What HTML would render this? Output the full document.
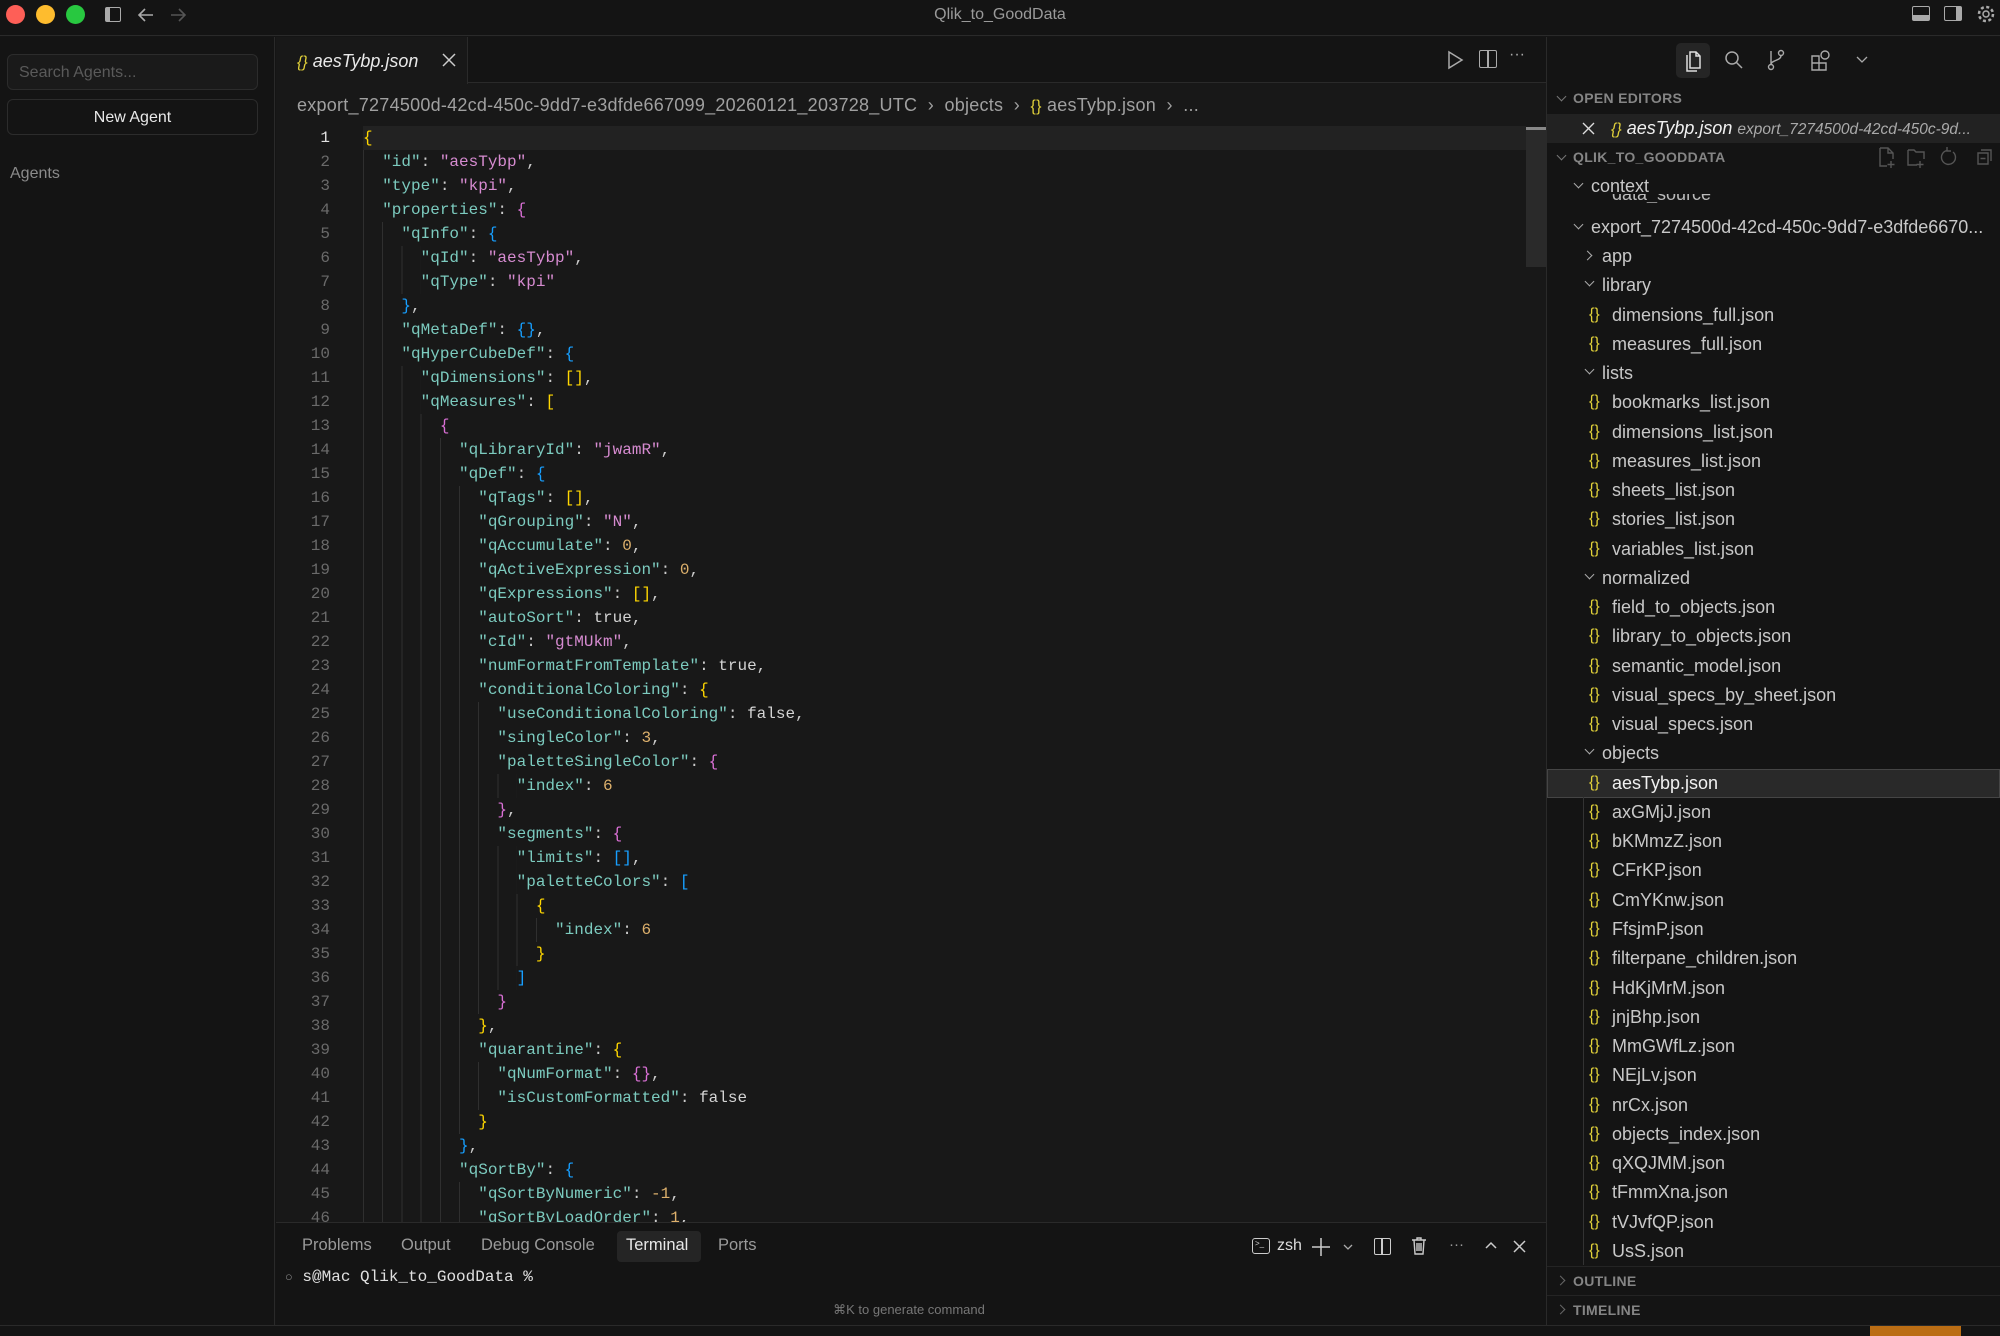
<!DOCTYPE html>
<html><head><meta charset="utf-8"><style>
*{margin:0;padding:0;box-sizing:border-box}
body{width:2000px;height:1336px;background:#151515;overflow:hidden;position:relative;font-family:"Liberation Sans",sans-serif;color:#ccc}
.a{position:absolute}
.mono{font-family:"Liberation Mono","DejaVu Sans Mono",monospace}
#code{position:absolute;left:363px;top:126px;width:1163px;height:1096px;overflow:hidden;font-size:16px}
.l{height:24px;line-height:24px;white-space:pre;background-image:repeating-linear-gradient(90deg,#2f2f2f 0 1px,transparent 1px 19.2px);background-repeat:no-repeat;color:#cccccc}
.k{color:#7ccbbf}.s{color:#d68bd0}.n{color:#ddb06c}.c{color:#d4d4d4}
.b1{color:#ffd700}.b2{color:#da70d6}.b3{color:#179fff}
#ln{position:absolute;left:290px;top:126px;width:40px;height:1096px;overflow:hidden;text-align:right;font-size:16px;color:#6a6a6a;line-height:24px}
.t{position:absolute;font-size:18px;color:#c8c8c8;white-space:nowrap;line-height:20px}
.br{color:#e2d23a;font-size:16px}
.hd{position:absolute;font-size:14px;font-weight:bold;color:#858585;letter-spacing:.3px}
.chev{position:absolute;width:7px;height:7px;border-right:1.5px solid #aaa;border-bottom:1.5px solid #aaa}
.dn{transform:rotate(45deg)}
.rt{transform:rotate(-45deg)}
.pt{position:absolute;top:1236px;font-size:16.5px;color:#9a9a9a}
</style></head><body>
<!-- title bar -->
<div class="a" style="left:0;top:0;width:2000px;height:36px;background:#141414;border-bottom:1px solid #2a2a2a"></div>
<div class="a" style="left:6px;top:5px;width:19px;height:19px;border-radius:50%;background:#fe5f57"></div>
<div class="a" style="left:36px;top:5px;width:19px;height:19px;border-radius:50%;background:#febc2e"></div>
<div class="a" style="left:66px;top:5px;width:19px;height:19px;border-radius:50%;background:#28c840"></div>
<div class="a" style="left:105px;top:7px;width:16px;height:15px;border:1.5px solid #aaa;border-radius:2px"><div style="width:4px;height:100%;background:#aaa"></div></div>
<svg class="a" style="left:136px;top:5px" width="20" height="20"><path d="M17 10H3M9 4L3 10L9 16" stroke="#aaa" stroke-width="1.6" fill="none"/></svg>
<svg class="a" style="left:168px;top:5px" width="20" height="20"><path d="M3 10H17M11 4L17 10L11 16" stroke="#555" stroke-width="1.6" fill="none"/></svg>
<div class="a" style="left:0;top:6px;width:2000px;text-align:center;font-size:16px;color:#9a9a9a">Qlik_to_GoodData</div>
<div class="a" style="left:1912px;top:6px;width:18px;height:15px;border:1.5px solid #aaa;border-radius:2px"><div style="position:absolute;bottom:0;left:0;right:0;height:5px;background:#aaa"></div></div>
<div class="a" style="left:1944px;top:6px;width:18px;height:15px;border:1.5px solid #aaa;border-radius:2px"><div style="position:absolute;top:0;bottom:0;right:0;width:5px;background:#aaa"></div></div>
<svg class="a" style="left:1976px;top:4px" width="20" height="20"><circle cx="10" cy="10" r="3" stroke="#aaa" stroke-width="1.5" fill="none"/><circle cx="10" cy="10" r="7" stroke="#aaa" stroke-width="2.5" fill="none" stroke-dasharray="3 2.5"/></svg>

<!-- left agents panel -->
<div class="a" style="left:0;top:37px;width:275px;height:1289px;background:#141414;border-right:1px solid #2a2a2a"></div>
<div class="a" style="left:7px;top:54px;width:251px;height:36px;border:1px solid #2c2c2c;border-radius:6px;background:#1a1a1a;font-size:16px;color:#5a5a5a;padding:9px 11px">Search Agents...</div>
<div class="a" style="left:7px;top:99px;width:251px;height:36px;border:1px solid #2c2c2c;border-radius:6px;font-size:16px;color:#e8e8e8;text-align:center;padding-top:9px">New Agent</div>
<div class="a" style="left:10px;top:165px;font-size:16px;color:#8a8a8a">Agents</div>

<!-- editor -->
<div class="a" style="left:276px;top:37px;width:1270px;height:1185px;background:#181818"></div>
<div class="a" style="left:276px;top:37px;width:1270px;height:46px;background:#141414;border-bottom:1px solid #2a2a2a"></div>
<div class="a" style="left:276px;top:37px;width:192px;height:47px;background:#181818;border-right:1px solid #2a2a2a"></div>
<div class="t" style="left:297px;top:51px;font-style:italic;color:#e8e8e8"><span class="br">{}</span> aesTybp.json</div>
<svg class="a" style="left:442px;top:53px" width="14" height="14"><path d="M1 1L13 13M13 1L1 13" stroke="#ccc" stroke-width="1.5"/></svg>
<svg class="a" style="left:1446px;top:50px" width="18" height="20"><path d="M3 2L16 10L3 18Z" stroke="#aaa" stroke-width="1.5" fill="none"/></svg>
<div class="a" style="left:1479px;top:50px;width:18px;height:18px;border:1.5px solid #aaa;border-radius:2px"><div style="position:absolute;left:7px;top:0;bottom:0;width:1.5px;background:#aaa"></div></div>
<div class="a" style="left:1509px;top:46px;font-size:16px;color:#aaa">···</div>
<div class="t" style="left:297px;top:95px;color:#a0a0a0;letter-spacing:0.25px">export_7274500d-42cd-450c-9dd7-e3dfde667099_20260121_203728_UTC &nbsp;›&nbsp; objects &nbsp;›&nbsp; <span class="br">{}</span> aesTybp.json &nbsp;›&nbsp; ...</div>
<div class="a" style="left:363px;top:126px;width:1163px;height:24px;background:#222"></div>
<div class="a" style="left:1526px;top:127px;width:20px;height:140px;background:#2a2a2a"></div>
<div class="a" style="left:1526px;top:127px;width:20px;height:3px;background:#888"></div>
<div id="ln" class="mono"><div style="color:#e0e0e0">1</div><div>2</div><div>3</div><div>4</div><div>5</div><div>6</div><div>7</div><div>8</div><div>9</div><div>10</div><div>11</div><div>12</div><div>13</div><div>14</div><div>15</div><div>16</div><div>17</div><div>18</div><div>19</div><div>20</div><div>21</div><div>22</div><div>23</div><div>24</div><div>25</div><div>26</div><div>27</div><div>28</div><div>29</div><div>30</div><div>31</div><div>32</div><div>33</div><div>34</div><div>35</div><div>36</div><div>37</div><div>38</div><div>39</div><div>40</div><div>41</div><div>42</div><div>43</div><div>44</div><div>45</div><div>46</div></div>
<div id="code" class="mono">
<div class="l" style="background-size:0 100%"><span class="b1">{</span></div>
<div class="l" style="background-size:19.2px 100%">  <span class="k">"id"</span>: <span class="s">"aesTybp"</span>,</div>
<div class="l" style="background-size:19.2px 100%">  <span class="k">"type"</span>: <span class="s">"kpi"</span>,</div>
<div class="l" style="background-size:19.2px 100%">  <span class="k">"properties"</span>: <span class="b2">{</span></div>
<div class="l" style="background-size:38.4px 100%">    <span class="k">"qInfo"</span>: <span class="b3">{</span></div>
<div class="l" style="background-size:57.6px 100%">      <span class="k">"qId"</span>: <span class="s">"aesTybp"</span>,</div>
<div class="l" style="background-size:57.6px 100%">      <span class="k">"qType"</span>: <span class="s">"kpi"</span></div>
<div class="l" style="background-size:38.4px 100%">    <span class="b3">}</span>,</div>
<div class="l" style="background-size:38.4px 100%">    <span class="k">"qMetaDef"</span>: <span class="b3">{}</span>,</div>
<div class="l" style="background-size:38.4px 100%">    <span class="k">"qHyperCubeDef"</span>: <span class="b3">{</span></div>
<div class="l" style="background-size:57.6px 100%">      <span class="k">"qDimensions"</span>: <span class="b1">[]</span>,</div>
<div class="l" style="background-size:57.6px 100%">      <span class="k">"qMeasures"</span>: <span class="b1">[</span></div>
<div class="l" style="background-size:76.8px 100%">        <span class="b2">{</span></div>
<div class="l" style="background-size:96px 100%">          <span class="k">"qLibraryId"</span>: <span class="s">"jwamR"</span>,</div>
<div class="l" style="background-size:96px 100%">          <span class="k">"qDef"</span>: <span class="b3">{</span></div>
<div class="l" style="background-size:115.2px 100%">            <span class="k">"qTags"</span>: <span class="b1">[]</span>,</div>
<div class="l" style="background-size:115.2px 100%">            <span class="k">"qGrouping"</span>: <span class="s">"N"</span>,</div>
<div class="l" style="background-size:115.2px 100%">            <span class="k">"qAccumulate"</span>: <span class="n">0</span>,</div>
<div class="l" style="background-size:115.2px 100%">            <span class="k">"qActiveExpression"</span>: <span class="n">0</span>,</div>
<div class="l" style="background-size:115.2px 100%">            <span class="k">"qExpressions"</span>: <span class="b1">[]</span>,</div>
<div class="l" style="background-size:115.2px 100%">            <span class="k">"autoSort"</span>: <span class="c">true</span>,</div>
<div class="l" style="background-size:115.2px 100%">            <span class="k">"cId"</span>: <span class="s">"gtMUkm"</span>,</div>
<div class="l" style="background-size:115.2px 100%">            <span class="k">"numFormatFromTemplate"</span>: <span class="c">true</span>,</div>
<div class="l" style="background-size:115.2px 100%">            <span class="k">"conditionalColoring"</span>: <span class="b1">{</span></div>
<div class="l" style="background-size:134.4px 100%">              <span class="k">"useConditionalColoring"</span>: <span class="c">false</span>,</div>
<div class="l" style="background-size:134.4px 100%">              <span class="k">"singleColor"</span>: <span class="n">3</span>,</div>
<div class="l" style="background-size:134.4px 100%">              <span class="k">"paletteSingleColor"</span>: <span class="b2">{</span></div>
<div class="l" style="background-size:153.6px 100%">                <span class="k">"index"</span>: <span class="n">6</span></div>
<div class="l" style="background-size:134.4px 100%">              <span class="b2">}</span>,</div>
<div class="l" style="background-size:134.4px 100%">              <span class="k">"segments"</span>: <span class="b2">{</span></div>
<div class="l" style="background-size:153.6px 100%">                <span class="k">"limits"</span>: <span class="b3">[]</span>,</div>
<div class="l" style="background-size:153.6px 100%">                <span class="k">"paletteColors"</span>: <span class="b3">[</span></div>
<div class="l" style="background-size:172.8px 100%">                  <span class="b1">{</span></div>
<div class="l" style="background-size:192px 100%">                    <span class="k">"index"</span>: <span class="n">6</span></div>
<div class="l" style="background-size:172.8px 100%">                  <span class="b1">}</span></div>
<div class="l" style="background-size:153.6px 100%">                <span class="b3">]</span></div>
<div class="l" style="background-size:134.4px 100%">              <span class="b2">}</span></div>
<div class="l" style="background-size:115.2px 100%">            <span class="b1">}</span>,</div>
<div class="l" style="background-size:115.2px 100%">            <span class="k">"quarantine"</span>: <span class="b1">{</span></div>
<div class="l" style="background-size:134.4px 100%">              <span class="k">"qNumFormat"</span>: <span class="b2">{}</span>,</div>
<div class="l" style="background-size:134.4px 100%">              <span class="k">"isCustomFormatted"</span>: <span class="c">false</span></div>
<div class="l" style="background-size:115.2px 100%">            <span class="b1">}</span></div>
<div class="l" style="background-size:96px 100%">          <span class="b3">}</span>,</div>
<div class="l" style="background-size:96px 100%">          <span class="k">"qSortBy"</span>: <span class="b3">{</span></div>
<div class="l" style="background-size:115.2px 100%">            <span class="k">"qSortByNumeric"</span>: <span class="n">-1</span>,</div>
<div class="l" style="background-size:115.2px 100%">            <span class="k">"qSortByLoadOrder"</span>: <span class="n">1</span>,</div>
</div>

<!-- panel -->
<div class="a" style="left:276px;top:1222px;width:1270px;height:104px;background:#141414;border-top:1px solid #2a2a2a"></div>
<div class="pt" style="left:302px">Problems</div>
<div class="pt" style="left:401px">Output</div>
<div class="pt" style="left:481px">Debug Console</div>
<div class="a" style="left:617px;top:1231px;width:84px;height:31px;background:#252525;border-radius:4px"></div>
<div class="pt" style="left:626px;color:#e8e8e8">Terminal</div>
<div class="pt" style="left:718px">Ports</div>
<div class="a" style="left:1252px;top:1238px;width:18px;height:16px;border:1.5px solid #ccc;border-radius:3px;font-size:8px;line-height:10px;color:#ccc;padding-left:2px">&gt;_</div>
<div class="a" style="left:1277px;top:1237px;font-size:16px;color:#ddd">zsh</div>
<svg class="a" style="left:1311px;top:1237px" width="20" height="20"><path d="M10 1V19M1 10H19" stroke="#ccc" stroke-width="1.5"/></svg>
<svg class="a" style="left:1343px;top:1243px" width="10" height="8"><path d="M1 2L5 6L9 2" stroke="#aaa" stroke-width="1.3" fill="none"/></svg>
<div class="a" style="left:1374px;top:1238px;width:17px;height:17px;border:1.5px solid #ccc;border-radius:2px"><div style="position:absolute;left:6px;top:0;bottom:0;width:1.5px;background:#ccc"></div></div>
<svg class="a" style="left:1410px;top:1236px" width="18" height="20"><path d="M2 4H16M7 4V2H11V4M4 4L5 18H13L14 4M7 7V15M9 7V15M11 7V15" stroke="#ccc" stroke-width="1.4" fill="none"/></svg>
<div class="a" style="left:1449px;top:1236px;font-size:15px;color:#999">···</div>
<svg class="a" style="left:1484px;top:1240px" width="14" height="10"><path d="M2 8L7 3L12 8" stroke="#ccc" stroke-width="1.5" fill="none"/></svg>
<svg class="a" style="left:1513px;top:1240px" width="13" height="13"><path d="M1 1L12 12M12 1L1 12" stroke="#ccc" stroke-width="1.5"/></svg>
<div class="a mono" style="left:285px;top:1268px;font-size:16px;color:#e0e0e0;white-space:pre"><span style="color:#888;font-size:13px">○</span> s@Mac Qlik_to_GoodData %</div>
<div class="a" style="left:809px;top:1302px;width:200px;text-align:center;font-size:13px;color:#777">⌘K to generate command</div>

<!-- right sidebar -->
<div class="a" style="left:1546px;top:37px;width:454px;height:1289px;background:#141414;border-left:1px solid #2a2a2a"></div>
<div class="a" style="left:1676px;top:43px;width:34px;height:35px;background:#252525;border-radius:5px"></div>
<svg class="a" style="left:1682px;top:49px" width="22" height="24"><path d="M8 3H14L18 7V19H8Z M14 3V7H18 M5 6V22H15" stroke="#ddd" stroke-width="1.5" fill="none"/></svg>
<svg class="a" style="left:1724px;top:50px" width="20" height="20"><circle cx="8" cy="8" r="6" stroke="#aaa" stroke-width="1.5" fill="none"/><path d="M12.5 12.5L18 18" stroke="#aaa" stroke-width="1.5"/></svg>
<svg class="a" style="left:1766px;top:49px" width="20" height="22"><circle cx="5" cy="18" r="2.5" stroke="#aaa" stroke-width="1.4" fill="none"/><circle cx="15" cy="4" r="2.5" stroke="#aaa" stroke-width="1.4" fill="none"/><path d="M5 2V15.5M15 6.5C15 12 5 11 5 15.5" stroke="#aaa" stroke-width="1.4" fill="none"/></svg>
<svg class="a" style="left:1810px;top:49px" width="22" height="22"><path d="M2 7H9V14H2Z M2 14H9V21H2Z M9 14H16V21H9Z" stroke="#aaa" stroke-width="1.4" fill="none"/><circle cx="15" cy="6" r="4" stroke="#aaa" stroke-width="1.4" fill="none"/></svg>
<svg class="a" style="left:1856px;top:56px" width="12" height="8"><path d="M1 1L6 6L11 1" stroke="#aaa" stroke-width="1.3" fill="none"/></svg>

<div class="chev dn" style="left:1558px;top:93px;border-color:#777"></div>
<div class="hd" style="left:1573px;top:90px">OPEN EDITORS</div>
<div class="a" style="left:1547px;top:114px;width:453px;height:29px;background:#222"></div>
<svg class="a" style="left:1582px;top:122px" width="13" height="13"><path d="M1 1L12 12M12 1L1 12" stroke="#ddd" stroke-width="1.4"/></svg>
<div class="t" style="left:1611px;top:118px;font-style:italic;color:#f0f0f0"><span class="br">{}</span> aesTybp.json <span style="font-size:15.5px;color:#aaa">export_7274500d-42cd-450c-9d...</span></div>
<div class="chev dn" style="left:1558px;top:152px;border-color:#777"></div>
<div class="hd" style="left:1573px;top:149px">QLIK_TO_GOODDATA</div>
<svg class="a" style="left:1877px;top:146px" width="120" height="24"><path d="M3 2H11L16 7V13M3 2V20H10M11 2V7H16 M14 15V22M10.5 18.5H17.5" stroke="#555" stroke-width="1.4" fill="none"/><path d="M31 4H37L39 6H47V13M31 4V19H40M43 15V22M39.5 18.5H46.5" stroke="#555" stroke-width="1.4" fill="none"/><path d="M76 6A7 7 0 1 1 70 4.5M70 1V5H74" stroke="#555" stroke-width="1.4" fill="none"/><path d="M101 7H111V18H101Z M104 4H114V15 M103.5 12.5H108.5" stroke="#555" stroke-width="1.4" fill="none"/></svg>

<div class="chev dn" style="left:1575px;top:180px"></div>
<div class="t" style="left:1591px;top:176px">context</div>
<div class="a" style="left:1612px;top:194px;height:9px;overflow:hidden"><div style="font-size:18px;color:#bbb;margin-top:-10px">data_source</div></div>
<div class="chev dn" style="left:1575px;top:221px"></div>
<div class="t" style="left:1591px;top:217px">export_7274500d-42cd-450c-9dd7-e3dfde6670...</div>

<div class="a" style="left:1547px;top:769px;width:453px;height:29px;background:#292929;border:1px solid #454545"></div>
<div class="a" style="left:1583px;top:797px;width:1px;height:468px;background:#333"></div>

<div id="tree"></div>
<script>
var items=[["f","app"],["d","library"],["j","dimensions_full.json"],["j","measures_full.json"],["d","lists"],["j","bookmarks_list.json"],["j","dimensions_list.json"],["j","measures_list.json"],["j","sheets_list.json"],["j","stories_list.json"],["j","variables_list.json"],["d","normalized"],["j","field_to_objects.json"],["j","library_to_objects.json"],["j","semantic_model.json"],["j","visual_specs_by_sheet.json"],["j","visual_specs.json"],["d","objects"],["j","aesTybp.json"],["j","axGMjJ.json"],["j","bKMmzZ.json"],["j","CFrKP.json"],["j","CmYKnw.json"],["j","FfsjmP.json"],["j","filterpane_children.json"],["j","HdKjMrM.json"],["j","jnjBhp.json"],["j","MmGWfLz.json"],["j","NEjLv.json"],["j","nrCx.json"],["j","objects_index.json"],["j","qXQJMM.json"],["j","tFmmXna.json"],["j","tVJvfQP.json"],["j","UsS.json"]];
var h="";
for(var i=0;i<items.length;i++){var y=256+i*29.26;var it=items[i];
if(it[0]=="j"){h+='<div class="t br" style="left:1589px;top:'+(y-10)+'px">{}</div><div class="t" style="left:1612px;top:'+(y-10)+'px;'+(it[1]=="aesTybp.json"?'color:#f0f0f0':'')+'">'+it[1]+'</div>';}
else{h+='<div class="chev '+(it[0]=="d"?'dn':'rt')+'" style="left:'+(it[0]=="d"?1586:1584)+'px;top:'+(it[0]=="d"?y-7:y-4)+'px"></div><div class="t" style="left:1602px;top:'+(y-10)+'px">'+it[1]+'</div>';}}
document.getElementById("tree").innerHTML=h;
</script>
<div class="a" style="left:1547px;top:1266px;width:453px;height:1px;background:#242424"></div>
<div class="chev rt" style="left:1557px;top:1277px;border-color:#666"></div>
<div class="hd" style="left:1573px;top:1273px">OUTLINE</div>
<div class="a" style="left:1547px;top:1295px;width:453px;height:1px;background:#242424"></div>
<div class="chev rt" style="left:1557px;top:1306px;border-color:#666"></div>
<div class="hd" style="left:1573px;top:1302px">TIMELINE</div>

<!-- status bar -->
<div class="a" style="left:0;top:1325px;width:2000px;height:11px;background:#141414;border-top:1px solid #2a2a2a"></div>
<div class="a" style="left:1870px;top:1326px;width:91px;height:10px;background:#bb6d14"></div>
</body></html>
